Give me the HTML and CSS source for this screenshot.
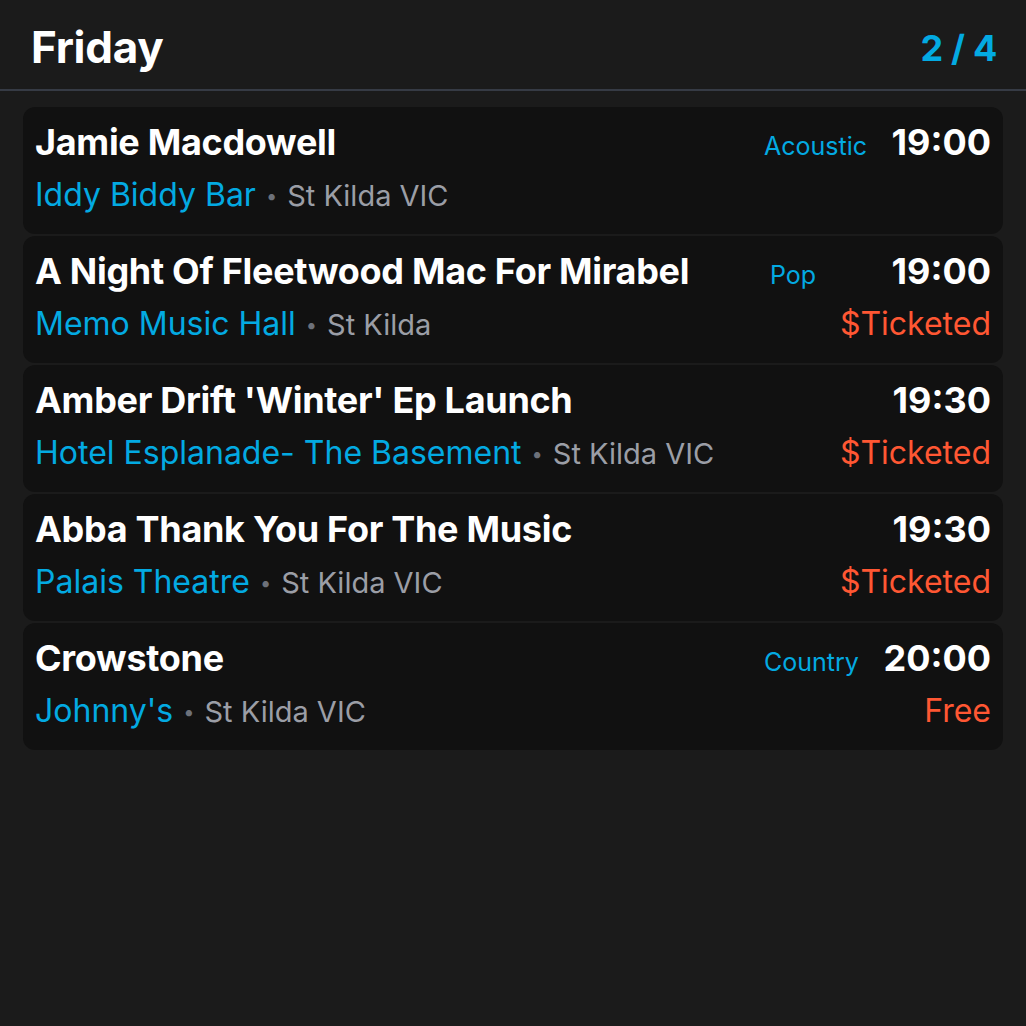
FILE: index.html
```html
<!DOCTYPE html>
<html lang="en">
<head>
<meta charset="utf-8">
<title>Friday</title>
<link rel="stylesheet" href="styles.css">
</head>
<body>
<div class="app">
  <header class="day-header">
    <h1 class="day-title">Friday</h1>
    <div class="day-count">2 / 4</div>
  </header>
  <main class="gig-list">
    <article class="gig">
      <div class="gig-title">Jamie Macdowell</div>
      <div class="gig-genre">Acoustic</div>
      <div class="gig-time">19:00</div>
      <div class="gig-place"><span class="venue">Iddy Biddy Bar</span><span class="dot">•</span><span class="suburb">St Kilda VIC</span></div>
      <div class="gig-price"></div>
    </article>
    <article class="gig">
      <div class="gig-title">A Night Of Fleetwood Mac For Mirabel</div>
      <div class="gig-genre gig-genre--short">Pop</div>
      <div class="gig-time">19:00</div>
      <div class="gig-place"><span class="venue">Memo Music Hall</span><span class="dot">•</span><span class="suburb">St Kilda</span></div>
      <div class="gig-price">$Ticketed</div>
    </article>
    <article class="gig">
      <div class="gig-title">Amber Drift 'Winter' Ep Launch</div>
      <div class="gig-genre"></div>
      <div class="gig-time">19:30</div>
      <div class="gig-place"><span class="venue">Hotel Esplanade- The Basement</span><span class="dot">•</span><span class="suburb">St Kilda VIC</span></div>
      <div class="gig-price">$Ticketed</div>
    </article>
    <article class="gig">
      <div class="gig-title">Abba Thank You For The Music</div>
      <div class="gig-genre"></div>
      <div class="gig-time">19:30</div>
      <div class="gig-place"><span class="venue">Palais Theatre</span><span class="dot">•</span><span class="suburb">St Kilda VIC</span></div>
      <div class="gig-price">$Ticketed</div>
    </article>
    <article class="gig">
      <div class="gig-title">Crowstone</div>
      <div class="gig-genre">Country</div>
      <div class="gig-time">20:00</div>
      <div class="gig-place"><span class="venue">Johnny's</span><span class="dot">•</span><span class="suburb">St Kilda VIC</span></div>
      <div class="gig-price">Free</div>
    </article>
  </main>
</div>
</body>
</html>
```
FILE: styles.css
```css
html, body {
  margin: 0;
  padding: 0;
  background: #1b1b1b;
}
body {
  font-family: Inter, "Noto Sans", "Liberation Sans", sans-serif;
  color: #ffffff;
  width: 1026px;
  height: 1026px;
}
.app {
  display: flex;
  flex-direction: column;
}
.day-header {
  display: flex;
  align-items: center;
  justify-content: space-between;
  padding: 21px 29px 15px 31px;
  border-bottom: 2px solid #363b45;
}
.day-title {
  margin: 0;
  font-size: 44px;
  font-weight: 700;
  line-height: 53px;
  color: #ffffff;
  letter-spacing: -0.3px;
}
.day-count {
  font-size: 36px;
  font-weight: 700;
  color: #03aae2;
  line-height: 44px;
  letter-spacing: -0.3px;
}
.gig-list {
  display: flex;
  flex-direction: column;
  gap: 2px;
  padding: 16px 23px;
}
.gig {
  background: #111111;
  border-radius: 12px;
  padding: 11px 12px 15px 12px;
  display: grid;
  grid-template-columns: 1fr 117px 110px;
  grid-template-rows: 48px 48px;
  row-gap: 5px;
  align-items: baseline;
  box-shadow: 0 0 10px rgba(255, 255, 255, 0.015);
}
.gig-title {
  font-size: 36px;
  font-weight: 700;
  line-height: 48px;
  letter-spacing: -0.3px;
  white-space: nowrap;
}
.gig-genre {
  font-size: 25px;
  line-height: 48px;
  color: #03aae2;
}
.gig-genre--short {
  padding-left: 6px;
}
.gig-time {
  font-size: 36px;
  font-weight: 700;
  line-height: 48px;
  text-align: right;
}
.gig-place {
  line-height: 48px;
  white-space: nowrap;
}
.venue {
  font-size: 32px;
  color: #03aae2;
}
.dot {
  color: #6d717a;
  font-size: 20px;
  margin: 0 10px;
  position: relative;
  top: -3px;
}
.suburb {
  font-size: 29px;
  color: #9b9ea6;
}
.gig-price {
  grid-column: 2 / 4;
  text-align: right;
  font-size: 32px;
  line-height: 48px;
  color: #ff5733;
}
```
